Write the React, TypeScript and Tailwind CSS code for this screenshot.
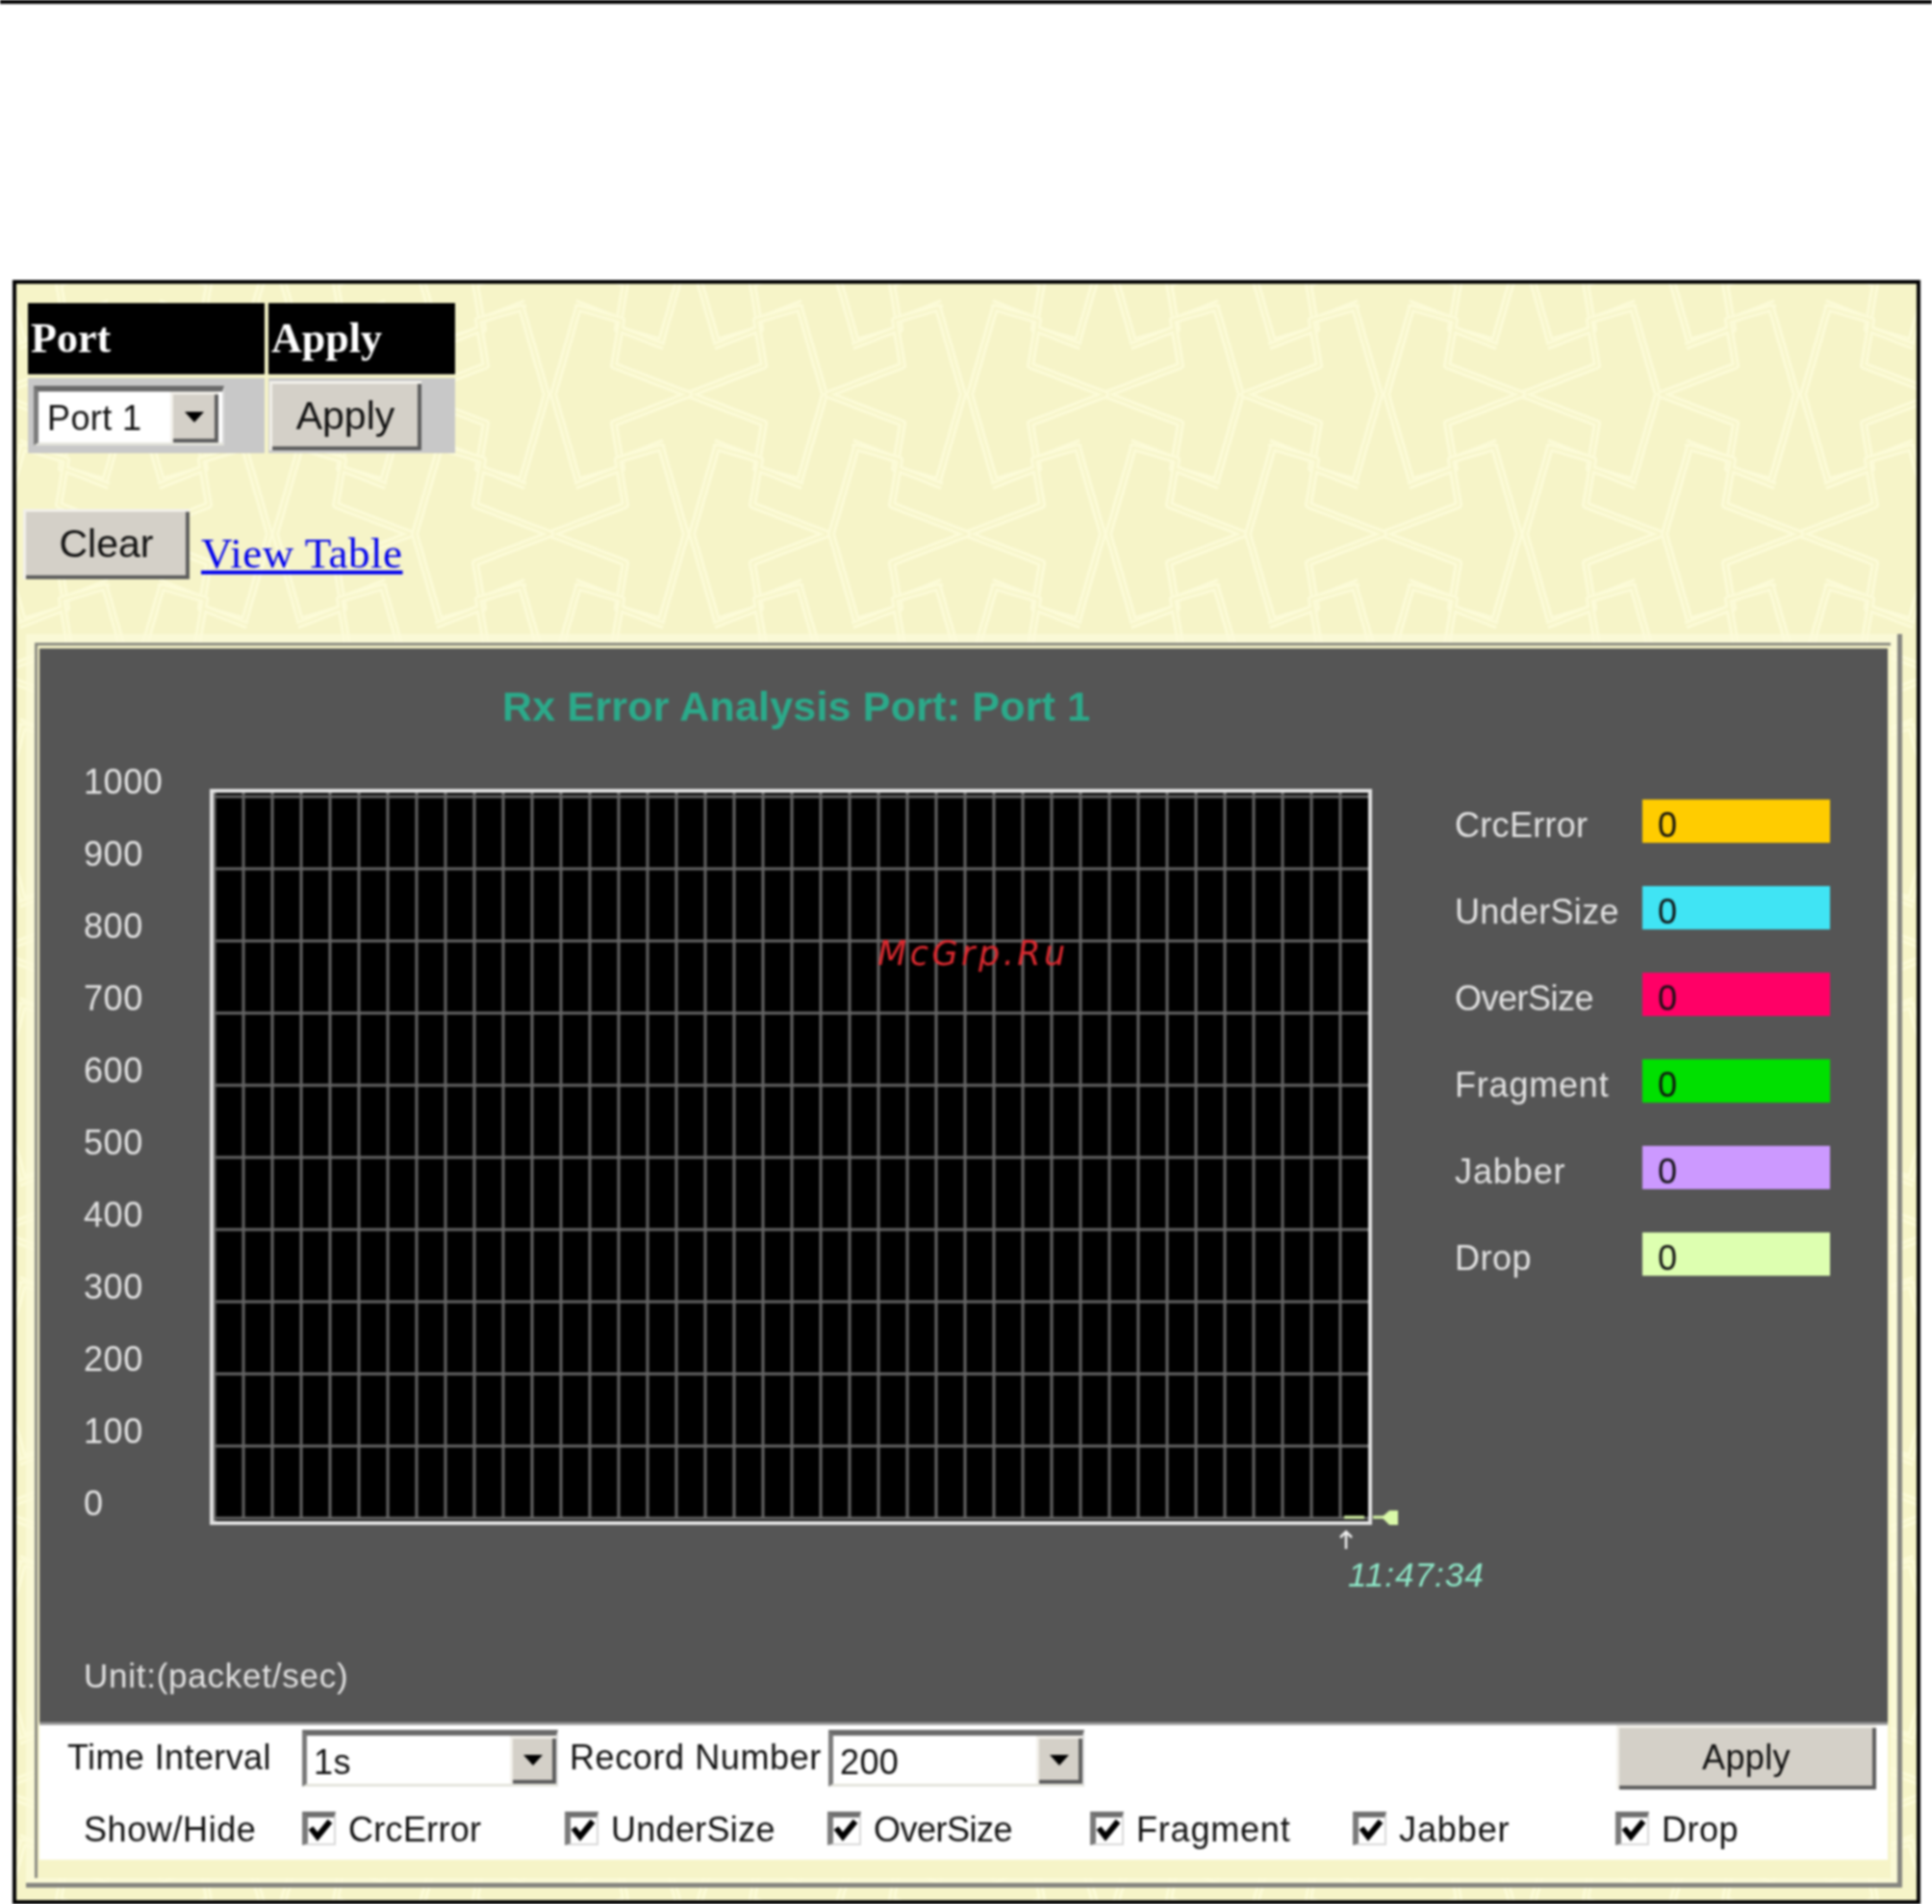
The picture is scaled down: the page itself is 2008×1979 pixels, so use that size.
import type { ReactNode } from 'react';

const SANS = "[font-family:'Liberation_Sans',Arial,sans-serif]";

const Y_LABELS = ['1000', '900', '800', '700', '600', '500', '400', '300', '200', '100', '0'];

const LEGEND = [
  { name: 'CrcError', color: 'bg-[#ffcc00]', track: 'tracking-[0.3px]' },
  { name: 'UnderSize', color: 'bg-[#40e4f4]', track: 'tracking-[0.3px]' },
  { name: 'OverSize', color: 'bg-[#ff0066]', track: 'tracking-[-0.5px]' },
  { name: 'Fragment', color: 'bg-[#00e000]', track: 'tracking-[0.8px]' },
  { name: 'Jabber', color: 'bg-[#cc99ff]', track: 'tracking-[0.9px]' },
  { name: 'Drop', color: 'bg-[#ddffb0]', track: 'tracking-[0.5px]' },
];

// wallpaper tile: every row has three lobes per 433px, odd rows are mirrored
const LOBES: [number, number, number][] = [];
for (let row = -1; row < 13; row++) {
  for (let col = -2; col < 6; col++) {
    const x = 266 + col * 433;
    const y = 115 + row * 145;
    const odd = Math.abs(row) % 2 === 1;
    if (odd) {
      LOBES.push([x - 144, y, 1], [x - 144, y, -1], [x + 144, y, -1]);
    } else {
      LOBES.push([x, y, 1], [x, y, -1], [x + 144, y, 1]);
    }
  }
}

const LOBE_PATH =
  'M0,0 L78,-30 L70,-77 L115,-90 L141,0 L115,90 L70,77 L78,30 Z M26,-50 L72,-68 M26,50 L72,68';

function Wallpaper() {
  return (
    <svg className="absolute inset-0 h-full w-full" aria-hidden="true">
      {LOBES.map(([x, y, dir], i) => (
        <g key={i} transform={`translate(${x} ${y}) scale(${dir} 1)`} fill="none" strokeLinejoin="round">
          <path d={LOBE_PATH} stroke="#fcfbd8" strokeWidth="8" />
          <path d={LOBE_PATH} stroke="#f6f4c8" strokeWidth="2" />
        </g>
      ))}
    </svg>
  );
}

function RaisedButton({ className, children }: { className: string; children: ReactNode }) {
  return (
    <button
      type="button"
      className={`flex shrink-0 items-center justify-center bg-[#d4d0c8] leading-none text-[#111] shadow-[inset_3px_3px_0_#f2f0ea,inset_-4px_-4px_0_#5c5c5c] ${SANS} ${className}`}
    >
      {children}
    </button>
  );
}

function SelectBox({
  value,
  className,
  textClass,
  arrowClass,
}: {
  value: string;
  className: string;
  textClass: string;
  arrowClass: string;
}) {
  return (
    <div
      className={`flex shrink-0 border-t-[6px] border-r-[2px] border-b-[3px] border-l-[5px] border-t-[#6a6a6a] border-r-[#dcdcdc] border-b-[#e4e4dc] border-l-[#7a7a7a] bg-white ${className}`}
    >
      <span className={`flex-1 pt-[5px] text-[36px] leading-[46px] tracking-[0.4px] text-[#111] ${SANS} ${textClass}`}>
        {value}
      </span>
      <span
        className={`flex shrink-0 items-center justify-center bg-[#d4d0c8] shadow-[inset_3px_3px_0_#f2f0ea,inset_-4px_-4px_0_#5c5c5c] ${arrowClass}`}
      >
        <span className="h-0 w-0 border-x-[10px] border-t-[11px] border-x-transparent border-t-black" />
      </span>
    </div>
  );
}

function CheckBox() {
  return (
    <div className="h-[35px] w-[35px] shrink-0 border-t-[6px] border-r-[2px] border-b-[2px] border-l-[6px] border-t-[#6f6f6f] border-r-[#d8d8d8] border-b-[#d8d8d8] border-l-[#7a7a7a] bg-white">
      <svg viewBox="0 0 27 27" className="h-full w-full" aria-hidden="true">
        <path d="M3 11 L10 20 L23 4" fill="none" stroke="#000" strokeWidth="6" />
      </svg>
    </div>
  );
}

function PlotArea() {
  const vertical = Array.from({ length: 39 }, (_, i) => 31 + i * 30);
  const horizontal = Array.from({ length: 11 }, (_, i) => 4 + i * 75);
  return (
    <div className="relative mt-[45px] h-[765px] w-[1208px] shrink-0 border-[4px] border-[#e0e0e0] bg-black">
      <svg width="1200" height="757" className="block" aria-hidden="true">
        <line x1="1" y1="0" x2="1" y2="757" stroke="#666" strokeWidth="3" />
        {vertical.map((x) => (
          <line key={x} x1={x} y1="0" x2={x} y2="754" stroke="#666" strokeWidth="3" />
        ))}
        {horizontal.map((y) => (
          <line key={y} x1="0" y1={y} x2="1200" y2={y} stroke="#666" strokeWidth="3" />
        ))}
      </svg>
      {/* live trace sticking out of the plot */}
      <svg
        width="64"
        height="20"
        viewBox="0 0 64 20"
        className="absolute left-[1174px] top-[744px] overflow-visible"
        aria-hidden="true"
      >
        <path d="M1 9 H22 M31 9 H46" stroke="#d9f9a8" strokeWidth="3" />
        <path d="M40 9 L48 2 H57 V17 H48 Z" fill="#d9f9a8" />
      </svg>
      <svg
        width="16"
        height="20"
        viewBox="0 0 16 20"
        className="absolute left-[1169px] top-[766px]"
        aria-hidden="true"
      >
        <path d="M8 20 V2 M2 8 L8 2 L14 8" fill="none" stroke="#f0f0f0" strokeWidth="2.5" />
      </svg>
      <span
        className={`absolute left-[1179px] top-[791px] text-[35px] leading-[44px] whitespace-nowrap text-[#8ee8c8] italic tracking-[1px] ${SANS}`}
      >
        11:47:34
      </span>
    </div>
  );
}

function GraphPanel() {
  return (
    <div className={`relative flex h-[1119px] flex-col border-b-[3px] border-b-[#999] bg-[#555] ${SANS}`}>
      <h1 className="ml-[481px] mt-[36px] text-[43px] leading-[48px] tracking-[0.2px] font-bold text-[#2baa8a]">
        Rx Error Analysis Port: Port 1
      </h1>
      <div className="mt-[17px] flex">
        <div className="ml-[46px] w-[131px] shrink-0 text-[36px] tracking-[0.6px] text-[#e2e2e2]">
          {Y_LABELS.map((label) => (
            <div key={label} className="flex h-[75px] items-center">
              {label}
            </div>
          ))}
        </div>
        <PlotArea />
        <div className="ml-[86px] mt-[56px] flex flex-col gap-[45px]">
          {LEGEND.map((item) => (
            <div key={item.name} className="flex h-[45px] items-center">
              <span className={`w-[195px] pt-[8px] text-[36px] text-[#e2e2e2] ${item.track}`}>{item.name}</span>
              <span
                className={`flex h-[45px] w-[195px] items-center pl-[16px] pt-[8px] text-[36px] text-[#111] ${item.color}`}
              >
                0
              </span>
            </div>
          ))}
        </div>
      </div>
      <div className="mb-[24px] ml-[46px] mt-auto text-[35px] leading-[48px] tracking-[0.75px] text-[#e2e2e2]">
        Unit:(packet/sec)
      </div>
      <span className="absolute left-[871px] top-[295px] text-[35px] leading-[44px] tracking-[3.5px] text-[#dd2a30] italic [font-family:'DejaVu_Sans',sans-serif]">
        McGrp.Ru
      </span>
    </div>
  );
}

function ControlPanel() {
  return (
    <div className={`h-[140px] bg-white text-[36px] tracking-[0.4px] text-[#111] ${SANS}`}>
      <div className="flex h-[68px] items-start">
        <span className="ml-[29px] w-[244px] shrink-0 pt-[10px] leading-[48px]">Time Interval</span>
        <SelectBox value="1s" className="mt-[5px] h-[59px] w-[266px]" textClass="pl-[7px]" arrowClass="w-[48px]" />
        <span className="ml-[12px] w-[269px] shrink-0 pt-[10px] leading-[48px] tracking-[0.6px] whitespace-nowrap">
          Record Number
        </span>
        <SelectBox value="200" className="mt-[5px] h-[59px] w-[266px]" textClass="pl-[7px]" arrowClass="w-[48px]" />
        <RaisedButton className="ml-auto mr-[12px] h-[67px] w-[270px] text-[36px]">Apply</RaisedButton>
      </div>
      <div className="mt-[21px] flex h-[36px] items-center">
        <span className="ml-[46px] w-[227px] shrink-0 pt-[4px] leading-[48px] tracking-[0.6px]">Show/Hide</span>
        {LEGEND.map((item) => (
          <div key={item.name} className="flex w-[273px] shrink-0 items-center gap-[13px]">
            <CheckBox />
            <span className={`pt-[4px] leading-[48px] ${item.track}`}>{item.name}</span>
          </div>
        ))}
      </div>
    </div>
  );
}

function App() {
  return (
    <div className="flex h-[1979px] w-[2008px] flex-col overflow-hidden bg-white blur-[0.8px]">
      <div className="h-[4px] shrink-0 bg-black" />
      <div className="relative ml-[13px] mt-[287px] h-[1688px] w-[1983px] shrink-0 overflow-hidden border-[4px] border-black bg-[#f6f4c8]">
        <Wallpaper />
        <div className="relative flex flex-col">
          <table className="ml-[12px] mt-[20px] w-[444px] table-fixed border-collapse">
            <tbody>
              <tr className="h-[76px]">
                <th className="w-[248px] bg-black pl-[3px] text-left text-[44px] leading-none font-bold text-white [font-family:'Liberation_Serif',serif]">
                  Port
                </th>
                <th className="border-l-[4px] border-[#f6f4c8] bg-black pl-[3px] text-left text-[44px] leading-none font-bold text-white [font-family:'Liberation_Serif',serif]">
                  Apply
                </th>
              </tr>
              <tr className="h-[80px] border-t-[4px] border-[#f6f4c8]">
                <td className="bg-[#c8c8c8] pl-[6px]">
                  <SelectBox
                    value="Port 1"
                    className="h-[62px] w-[198px]"
                    textClass="pl-[9px]"
                    arrowClass="mr-[4px] w-[50px]"
                  />
                </td>
                <td className="border-l-[4px] border-[#f6f4c8] bg-[#c8c8c8] pl-[1px]">
                  <RaisedButton className="h-[72px] w-[158px] text-[41px]">Apply</RaisedButton>
                </td>
              </tr>
            </tbody>
          </table>
          <div className="ml-[7px] mt-[58px] flex items-end gap-[12px]">
            <RaisedButton className="h-[73px] w-[173px] text-[41px]">Clear</RaisedButton>
            <a
              href="#"
              className="mb-[2px] text-[45px] leading-[50px] tracking-[0.5px] text-[#0000ee] underline [font-family:'Liberation_Serif',serif]"
            >
              View Table
            </a>
          </div>
          <div className="ml-[10px] mt-[57px] h-[1303px] w-[1950px] border-r-[5px] border-b-[5px] border-[#85857f] bg-[#fcfbdc]/70 pl-[9px] pt-[9px]">
            <div className="h-[1284px] w-[1929px] border-l-[3px] border-t-[3px] border-[#8a8a80] bg-[#f6f4c8] pl-[2px] pt-[3px]">
              <div className="w-[1921px]">
                <GraphPanel />
                <ControlPanel />
              </div>
            </div>
          </div>
        </div>
      </div>
    </div>
  );
}

export default App;
